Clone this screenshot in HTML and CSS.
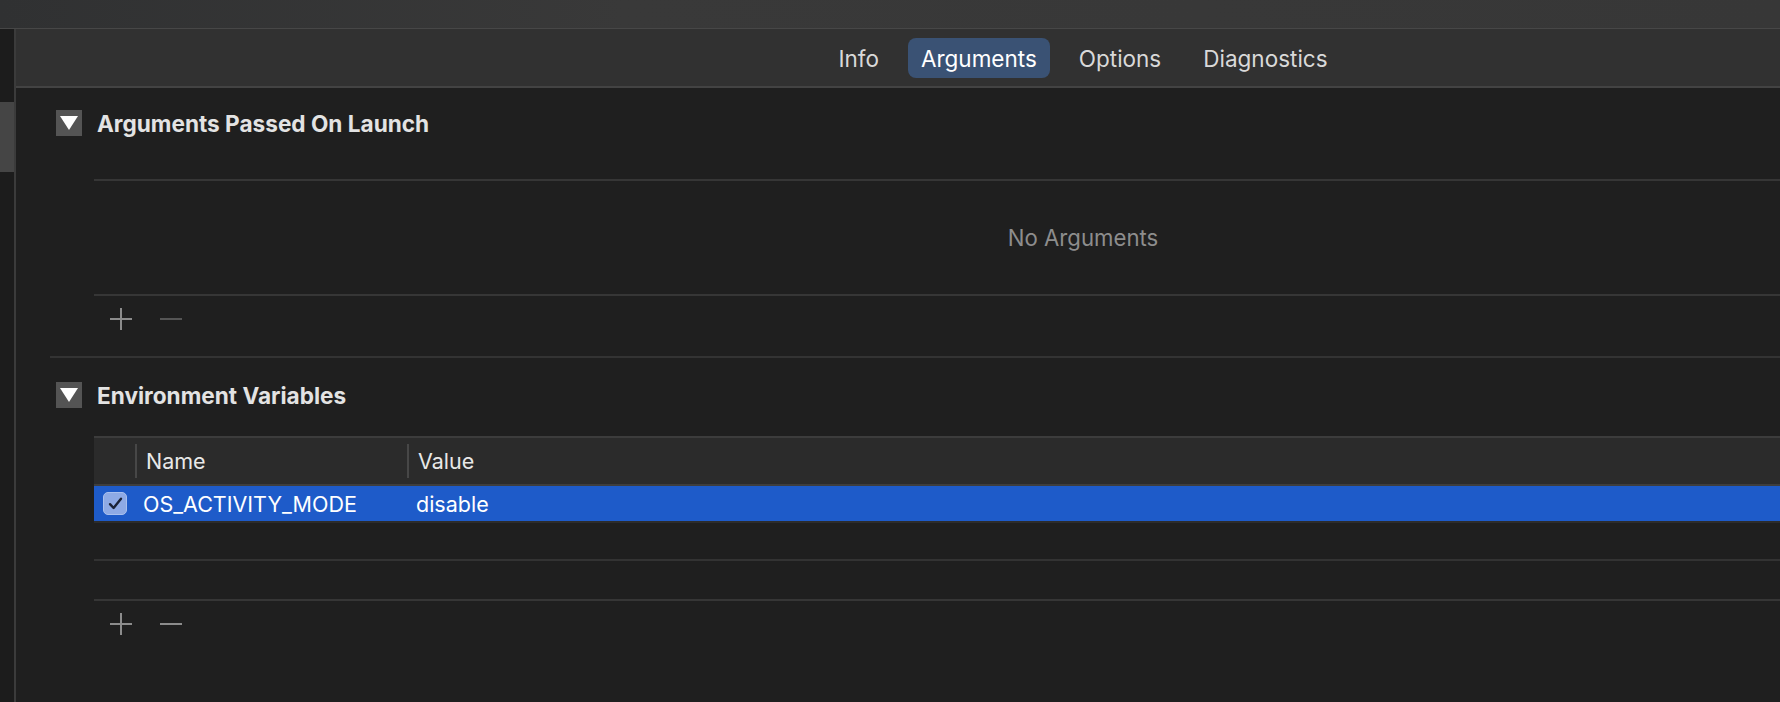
FILE: index.html
```html
<!DOCTYPE html>
<html lang="en">

<head>
    <meta charset="UTF-8">
    <meta name="viewport" content="width=device-width, initial-scale=1.0">
    <title>Scheme - Run</title>
    <link rel="stylesheet" href="styles.css">
</head>

<body>

    <div class="titlebar"></div>

    <div class="window">
        <aside class="sidebar">
            <div class="sidebar-thumb"></div>
        </aside>

        <main class="editor">
            <nav class="tabs">
                <a href="#" class="tab">Info</a>
                <a href="#" class="tab active">Arguments</a>
                <a href="#" class="tab">Options</a>
                <a href="#" class="tab">Diagnostics</a>
            </nav>

            <div class="content">
                <!-- Argumentos -->
                <section class="group">
                    <div class="group-head">
                        <span class="disclosure"></span>
                        <h2>Arguments Passed On Launch</h2>
                    </div>
                    <div class="list list-empty">
                        <p>No Arguments</p>
                    </div>
                    <div class="list-actions">
                        <button class="action">
                            <svg width="22" height="22" viewBox="0 0 22 22"><path d="M11 0v22M0 11h22" /></svg>
                        </button>
                        <button class="action disabled">
                            <svg width="22" height="22" viewBox="0 0 22 22"><path d="M0 11h22" /></svg>
                        </button>
                    </div>
                </section>

                <div class="separator"></div>

                <!-- Variaveis de ambiente -->
                <section class="group group-env">
                    <div class="group-head">
                        <span class="disclosure"></span>
                        <h2>Environment Variables</h2>
                    </div>
                    <div class="list">
                        <div class="table-head">
                            <div class="col col-check"></div>
                            <div class="col col-name">Name</div>
                            <div class="col col-value">Value</div>
                        </div>
                        <div class="row selected">
                            <div class="col col-check">
                                <span class="checkbox">
                                    <svg width="15" height="13" viewBox="0 0 15 13"><path d="M2 7.2l3.6 3.8L13 1.8" /></svg>
                                </span>
                            </div>
                            <div class="col col-name">OS_ACTIVITY_MODE</div>
                            <div class="col col-value">disable</div>
                        </div>
                        <div class="row"></div>
                        <div class="row"></div>
                    </div>
                    <div class="list-actions">
                        <button class="action">
                            <svg width="22" height="22" viewBox="0 0 22 22"><path d="M11 0v22M0 11h22" /></svg>
                        </button>
                        <button class="action">
                            <svg width="22" height="22" viewBox="0 0 22 22"><path d="M0 11h22" /></svg>
                        </button>
                    </div>
                </section>
            </div>
        </main>
    </div>

</body>

</html>
```

FILE: styles.css
```css
* {
    margin: 0;
    padding: 0;
    box-sizing: border-box;
}

body {
    font-family: Inter, "Liberation Sans", Arial, sans-serif;
    background-color: #1f1f1f;
    color: #dedede;
    width: 1780px;
    height: 702px;
    overflow: hidden;
}

.titlebar {
    height: 29px;
    background: linear-gradient(to right, #303132, #393939 35%, #373737);
    border-bottom: 1px solid #474747;
}

.window {
    display: flex;
    height: 673px;
}

.sidebar {
    width: 16px;
    flex-shrink: 0;
    background-color: #1c1c1c;
    border-right: 2px solid #3b3b3b;
    padding-top: 73px;
}

.sidebar-thumb {
    height: 70px;
    background-color: #454545;
}

.editor {
    width: 2134px;
    flex-shrink: 0;
}

/* Abas */
.tabs {
    height: 59px;
    background-color: #313131;
    border-bottom: 2px solid #434343;
    display: flex;
    justify-content: center;
    align-items: center;
    gap: 16px;
    padding-top: 1px;
}

.tab {
    height: 40px;
    padding: 0 13px;
    border-radius: 8px;
    display: flex;
    align-items: center;
    font-size: 22.5px;
    color: #d9d9d9;
    text-decoration: none;
}

.tab.active {
    background-color: #3a5274;
    color: #fff;
}

.content {
    padding-top: 22px;
}

.group-head {
    display: flex;
    align-items: center;
    gap: 15px;
    margin-left: 40px;
    height: 26px;
}

.disclosure {
    width: 26px;
    height: 26px;
    background-color: #545454;
    position: relative;
}

.disclosure::after {
    content: "";
    position: absolute;
    left: 4px;
    top: 6px;
    border-left: 9px solid transparent;
    border-right: 9px solid transparent;
    border-top: 14px solid #fff;
}

.group-head h2 {
    font-size: 22.6px;
    font-weight: bold;
    color: #e3e3e3;
}

.list {
    margin: 43px 78px 0;
    border-top: 2px solid #363636;
    border-bottom: 2px solid #363636;
}

.list-empty {
    height: 117px;
    display: flex;
    justify-content: center;
    align-items: center;
}

.list-empty p {
    font-size: 22.2px;
    color: #8d8d8d;
}

.list-actions {
    display: flex;
    gap: 28px;
    padding: 12px 0 0 16px;
    margin-left: 78px;
    height: 60px;
}

.action {
    width: 22px;
    height: 22px;
    border: none;
    background: none;
    display: flex;
}

.action svg path {
    stroke: #8c8c8c;
    stroke-width: 2;
    fill: none;
}

.action.disabled svg path {
    stroke: #555;
}

.separator {
    margin-left: 34px;
    border-top: 2px solid #333;
}

.group-env {
    padding-top: 24px;
}

.group-env .list {
    margin-top: 28px;
    border-top-color: #3c3c3c;
}

/* Tabela */
.table-head {
    display: flex;
    align-items: center;
    height: 48px;
    background-color: #2b2b2b;
    border-bottom: 2px solid #3e3e3e;
    font-size: 21.5px;
    color: #e8e8e8;
}

.table-head .col {
    height: 34px;
    display: flex;
    align-items: center;
}

.col-check {
    width: 41px;
    padding-left: 9px;
}

.col-name {
    width: 272px;
    padding-left: 9px;
}

.col-value {
    padding-left: 9px;
}

.table-head .col-name,
.table-head .col-value {
    border-left: 2px solid #474747;
}

.row {
    height: 38px;
    display: flex;
    align-items: center;
    border-bottom: 2px solid #333;
    font-size: 21.5px;
}

.row:last-child {
    border-bottom: none;
}

.row .col-name,
.row .col-value {
    padding-left: 8px;
}

.row .col-value {
    padding-left: 9px;
}

.row.selected {
    height: 37px;
    background-color: #1e5bc9;
    color: #fff;
    border-bottom-color: #2c2c2c;
}

.checkbox {
    width: 24px;
    height: 23px;
    border-radius: 5px;
    background-color: #8eaae5;
    border: 1px solid #a9c0ee;
    display: flex;
    justify-content: center;
    align-items: center;
}

.checkbox svg path {
    stroke: #1b2337;
    stroke-width: 2.4;
    fill: none;
    stroke-linecap: round;
    stroke-linejoin: round;
}
```
